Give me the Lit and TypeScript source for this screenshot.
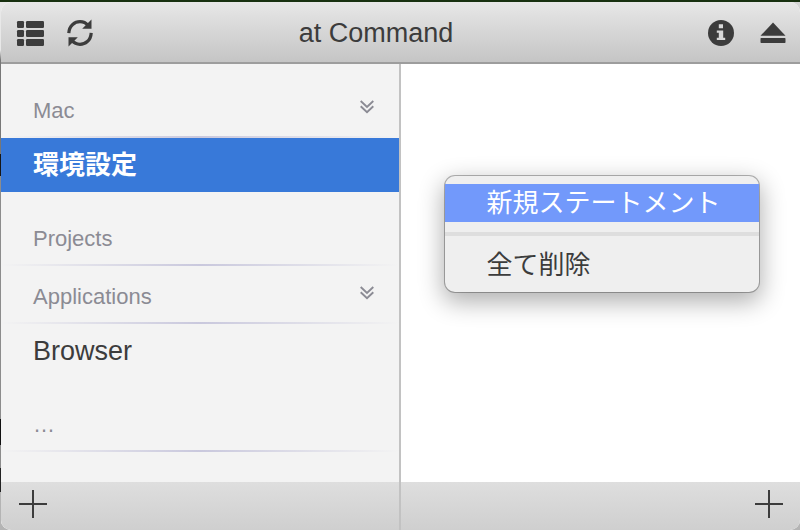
import { LitElement, html, css, svg, nothing } from "lit";
import { customElement, state } from "lit/decorators.js";

interface Section {
  title: string;
  items: string[];
  collapsible?: boolean;
}

const listIcon = html`<svg width="28" height="26" viewBox="0 0 28 26" fill="currentColor" aria-hidden="true">
  ${[1, 10, 19].map((y) => svg`
    <rect x="1" y=${y} width="7" height="7" rx="1.2"></rect>
    <rect x="10" y=${y} width="18" height="7" rx="1.2"></rect>`)}
</svg>`;

const syncIcon = html`<svg width="28" height="28" viewBox="0 0 28 28" aria-hidden="true">
  <g fill="none" stroke="currentColor" stroke-width="3.2">
    <path d="M2.800 14.200C3.200 6.200 9 2.700 14 2.700C17.800 2.700 20.200 4.200 22 6.400"></path>
    <path d="M25.200 13.800C24.800 21.800 19 25.300 14 25.300C10.200 25.300 7.800 23.800 6 21.600"></path>
  </g>
  <path fill="currentColor" d="M25.500 .6V9.700H16.200ZM2.500 27.400V18.300H11.800Z"></path>
</svg>`;

const infoIcon = html`<svg width="26" height="26" viewBox="0 0 26 26" aria-hidden="true">
  <circle cx="13" cy="13" r="13" fill="currentColor"></circle>
  <path fill="#d8d8d8" d="M10.800 4.200H15V8.200H10.800ZM8.800 10.600H15.200V17.800H17.200V20H8.800V17.800H10.800V12.800H8.800Z"></path>
</svg>`;

const ejectIcon = html`<svg width="26" height="22" viewBox="0 0 26 22" fill="currentColor" aria-hidden="true">
  <path d="M13 0.500L25.500 13.800H.5Z"></path>
  <rect x=".5" y="16" width="25" height="5" rx=".8"></rect>
</svg>`;

const chevronsIcon = html`<svg width="14" height="14" viewBox="0 0 14 14" fill="none" stroke="currentColor" stroke-width="1.900" aria-hidden="true">
  <path d="M.7 1L7 7L13.300 1M.7 6.200L7 12.200L13.300 6.200"></path>
</svg>`;

const plusIcon = html`<svg width="28" height="28" viewBox="0 0 28 28" fill="currentColor" aria-hidden="true">
  <path d="M13 0H15V13H28V15H15V28H13V15H0V13H13Z"></path>
</svg>`;

@customElement("app-root")
export class AppRoot extends LitElement {
  @state() private selected = "環境設定";

  private sections: Section[] = [
    { title: "Mac", items: ["環境設定"], collapsible: true },
    { title: "Projects", items: [] },
    { title: "Applications", items: ["Browser"], collapsible: true },
    { title: "…", items: [] },
  ];

  static styles = css`
    :host {
      display: block;
      box-sizing: border-box;
      height: 100vh;
      padding: 2px 0 0 1px;
      color: #3c3c3c;
      font: 26px/32px "Liberation Sans", "Noto Sans CJK JP", sans-serif;
      background:
        linear-gradient(#17300f, #17300f) 0 0 / 100% 2px no-repeat,
        linear-gradient(#d4d4d4, #d4d4d4) 100% 0 / 12px 20px no-repeat,
        linear-gradient(#e8e8e8 0 50px, #777 60px 154px, #161616 154px 176px, #8c8c8c 176px 419px,
          #111 419px 445px, #8c8c8c 445px 468px, #222 468px 492px, #b4b4b4 492px);
    }
    * { box-sizing: border-box; }
    button {
      padding: 0;
      border: 0;
      background: none;
      color: inherit;
      font: inherit;
      text-align: left;
    }
    svg { display: block; }
    .window {
      display: flex;
      flex-direction: column;
      height: 100%;
      overflow: hidden;
      border-radius: 10px;
      background: #fff;
    }
    .toolbar {
      display: grid;
      grid-template-columns: 1fr auto 1fr;
      align-items: center;
      flex: none;
      height: 62px;
      padding: 2px 14px 0 15px;
      border-bottom: 2px solid #9d9d9d;
      background: linear-gradient(#e7e7e7, #c5c5c5);
    }
    .group {
      display: flex;
      align-items: center;
      gap: 22px;
    }
    .group.end {
      justify-content: flex-end;
      gap: 26px;
    }
    h1 {
      margin: 0;
      padding-right: 50px;
      font-size: 27px;
      font-weight: 400;
    }
    .panes {
      display: grid;
      grid-template-columns: 1fr 1fr;
      flex: 1;
      min-height: 0;
    }
    .pane {
      position: relative;
      display: flex;
      flex-direction: column;
      min-width: 0;
    }
    .sidebar {
      border-right: 2px solid #c2c2c2;
      background: #f3f3f3;
    }
    .content { flex: 1; min-height: 0; overflow: hidden; }
    .heading {
      display: flex;
      align-items: center;
      justify-content: space-between;
      height: 58px;
      padding: 4px 25px 0 32px;
      color: #8b8b94;
      background: linear-gradient(90deg, transparent, #c9c8dd 50%, transparent) 0 100% / 100% 2px no-repeat;
    }
    .heading.spaced { margin-top: 16px; }
    h2 {
      margin: 0;
      font-size: 22px;
      font-weight: 400;
    }
    .chevrons { margin-bottom: 8px; }
    .item {
      display: block;
      width: 100%;
      height: 54px;
      padding: 0 32px;
      font-size: 27px;
    }
    .item.selected {
      color: #fff;
      font-size: 26px;
      font-weight: 700;
      background: #3879d9;
    }
    .footer {
      display: flex;
      flex: none;
      height: 48px;
      padding: 8px 17px 8px 18px;
      align-items: flex-start;
      background: linear-gradient(#dedede, #cfcfcf);
    }
    .footer.end { justify-content: flex-end; }
    .menu {
      position: absolute;
      top: 112px;
      left: 44px;
      width: 314px;
      padding: 8px 0;
      border-radius: 10px;
      background: #efefef;
      box-shadow: 0 0 0 1px #00000048, 0 8px 24px 2px #00000050;
    }
    .command {
      display: block;
      width: 100%;
      height: 38px;
      padding: 0 42px;
      white-space: nowrap;
    }
    .command.active {
      color: #fff;
      background: #7299fb;
    }
    .menu hr {
      height: 4px;
      margin: 10px 0;
      border: 0;
      background: #dedede;
    }
  `;

  private renderSection(section: Section, index: number) {
    const spaced = index === 0 || this.sections[index - 1].items.length > 0;
    return html`
      <section>
        <div class="heading ${spaced ? "spaced" : ""}">
          <h2>${section.title}</h2>
          ${section.collapsible
            ? html`<button class="chevrons" aria-label="Collapse ${section.title}">${chevronsIcon}</button>`
            : nothing}
        </div>
        ${section.items.map((item) => html`
          <button class="item ${item === this.selected ? "selected" : ""}"
            @click=${() => (this.selected = item)}>${item}</button>`)}
      </section>`;
  }

  render() {
    return html`
      <div class="window">
        <header class="toolbar">
          <div class="group">
            <button aria-label="List">${listIcon}</button>
            <button aria-label="Reload">${syncIcon}</button>
          </div>
          <h1>at Command</h1>
          <div class="group end">
            <button aria-label="Information">${infoIcon}</button>
            <button aria-label="Eject">${ejectIcon}</button>
          </div>
        </header>
        <div class="panes">
          <nav class="pane sidebar">
            <div class="content">${this.sections.map((s, i) => this.renderSection(s, i))}</div>
            <div class="footer"><button aria-label="Add item">${plusIcon}</button></div>
          </nav>
          <main class="pane">
            <div class="content"></div>
            <div class="footer end"><button aria-label="Add statement">${plusIcon}</button></div>
            <div class="menu" role="menu">
              <button class="command active" role="menuitem">新規ステートメント</button>
              <hr />
              <button class="command" role="menuitem">全て削除</button>
            </div>
          </main>
        </div>
      </div>`;
  }
}
